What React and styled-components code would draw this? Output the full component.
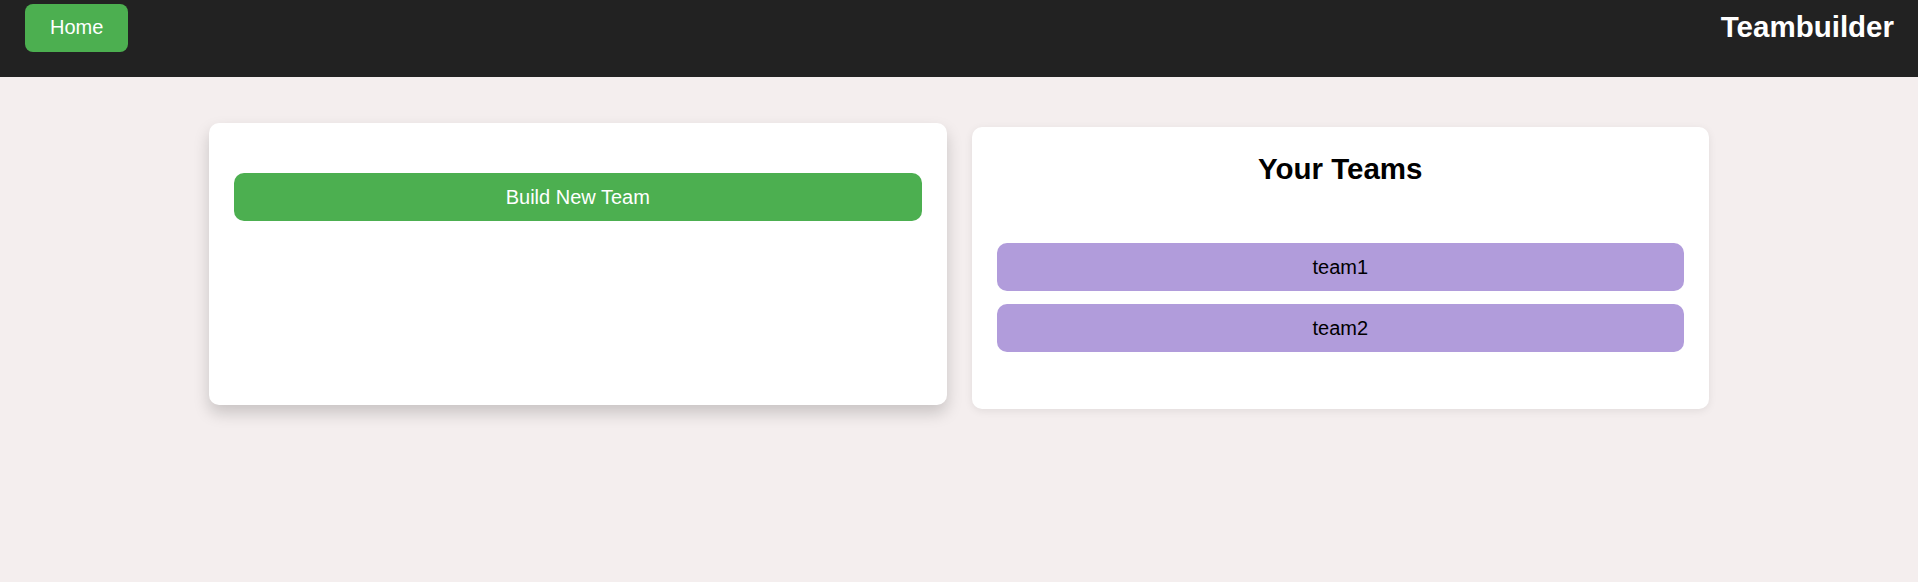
import React from "react";
import styled, { createGlobalStyle } from "styled-components";

const GlobalStyle = createGlobalStyle`
  html, body { margin: 0; padding: 0; }
  body {
    background: #f4eeee;
    font-family: "Liberation Sans", Arial, sans-serif;
    min-height: 582px;
  }
`;

const Header = styled.header`
  display: flex;
  justify-content: space-between;
  align-items: flex-start;
  height: 77px;
  box-sizing: border-box;
  padding: 4px 24px 0 25px;
  background: #222222;
`;

const HomeButton = styled.button`
  font-family: inherit;
  font-size: 20px;
  line-height: 23px;
  color: #ffffff;
  background: #4caf50;
  border: none;
  border-radius: 8px;
  padding: 12px 25px 13px;
  cursor: pointer;
`;

const Title = styled.h1`
  margin: 6px 0 0;
  font-size: 29.5px;
  font-weight: bold;
  color: #ffffff;
  line-height: normal;
`;

const Main = styled.main`
  display: grid;
  grid-template-columns: 1fr 1fr;
  gap: 25px;
  max-width: 1500px;
  margin: 50px auto 0;
  align-items: stretch;
`;

const Card = styled.section`
  background: #ffffff;
  border-radius: 10px;
  padding: 25px 25px ${(p) => p.$padBottom || "25px"};
  box-sizing: border-box;
  box-shadow: ${(p) =>
    p.$lifted ? "0 8px 16px rgba(0,0,0,0.18)" : "0 2px 8px rgba(0,0,0,0.08)"};
  transform: ${(p) => (p.$lifted ? "translateY(-4px)" : "none")};
  display: flex;
  flex-direction: column;
`;

const WideButton = styled.button`
  display: block;
  width: 100%;
  height: 48px;
  border: none;
  border-radius: 10px;
  font-family: inherit;
  font-size: 20px;
  cursor: pointer;
  background: ${(p) => p.$bg};
  color: ${(p) => p.$fg};
`;

const BuildButton = styled(WideButton)`
  margin-top: 25px;
`;

const CardTitle = styled.h2`
  margin: 0 0 57px;
  text-align: center;
  font-size: 29.5px;
  font-weight: bold;
  color: #000000;
  line-height: normal;
`;

const TeamList = styled.div`
  display: flex;
  flex-direction: column;
  gap: 13px;
`;

const teams = ["team1", "team2"];

export default function App() {
  return (
    <>
      <GlobalStyle />
      <Header>
        <HomeButton>Home</HomeButton>
        <Title>Teambuilder</Title>
      </Header>
      <Main>
        <Card $lifted>
          <BuildButton $bg="#4caf50" $fg="#ffffff">
            Build New Team
          </BuildButton>
        </Card>
        <Card $padBottom="57px">
          <CardTitle>Your Teams</CardTitle>
          <TeamList>
            {teams.map((t) => (
              <WideButton key={t} $bg="#b19cdb" $fg="#000000">
                {t}
              </WideButton>
            ))}
          </TeamList>
        </Card>
      </Main>
    </>
  );
}
